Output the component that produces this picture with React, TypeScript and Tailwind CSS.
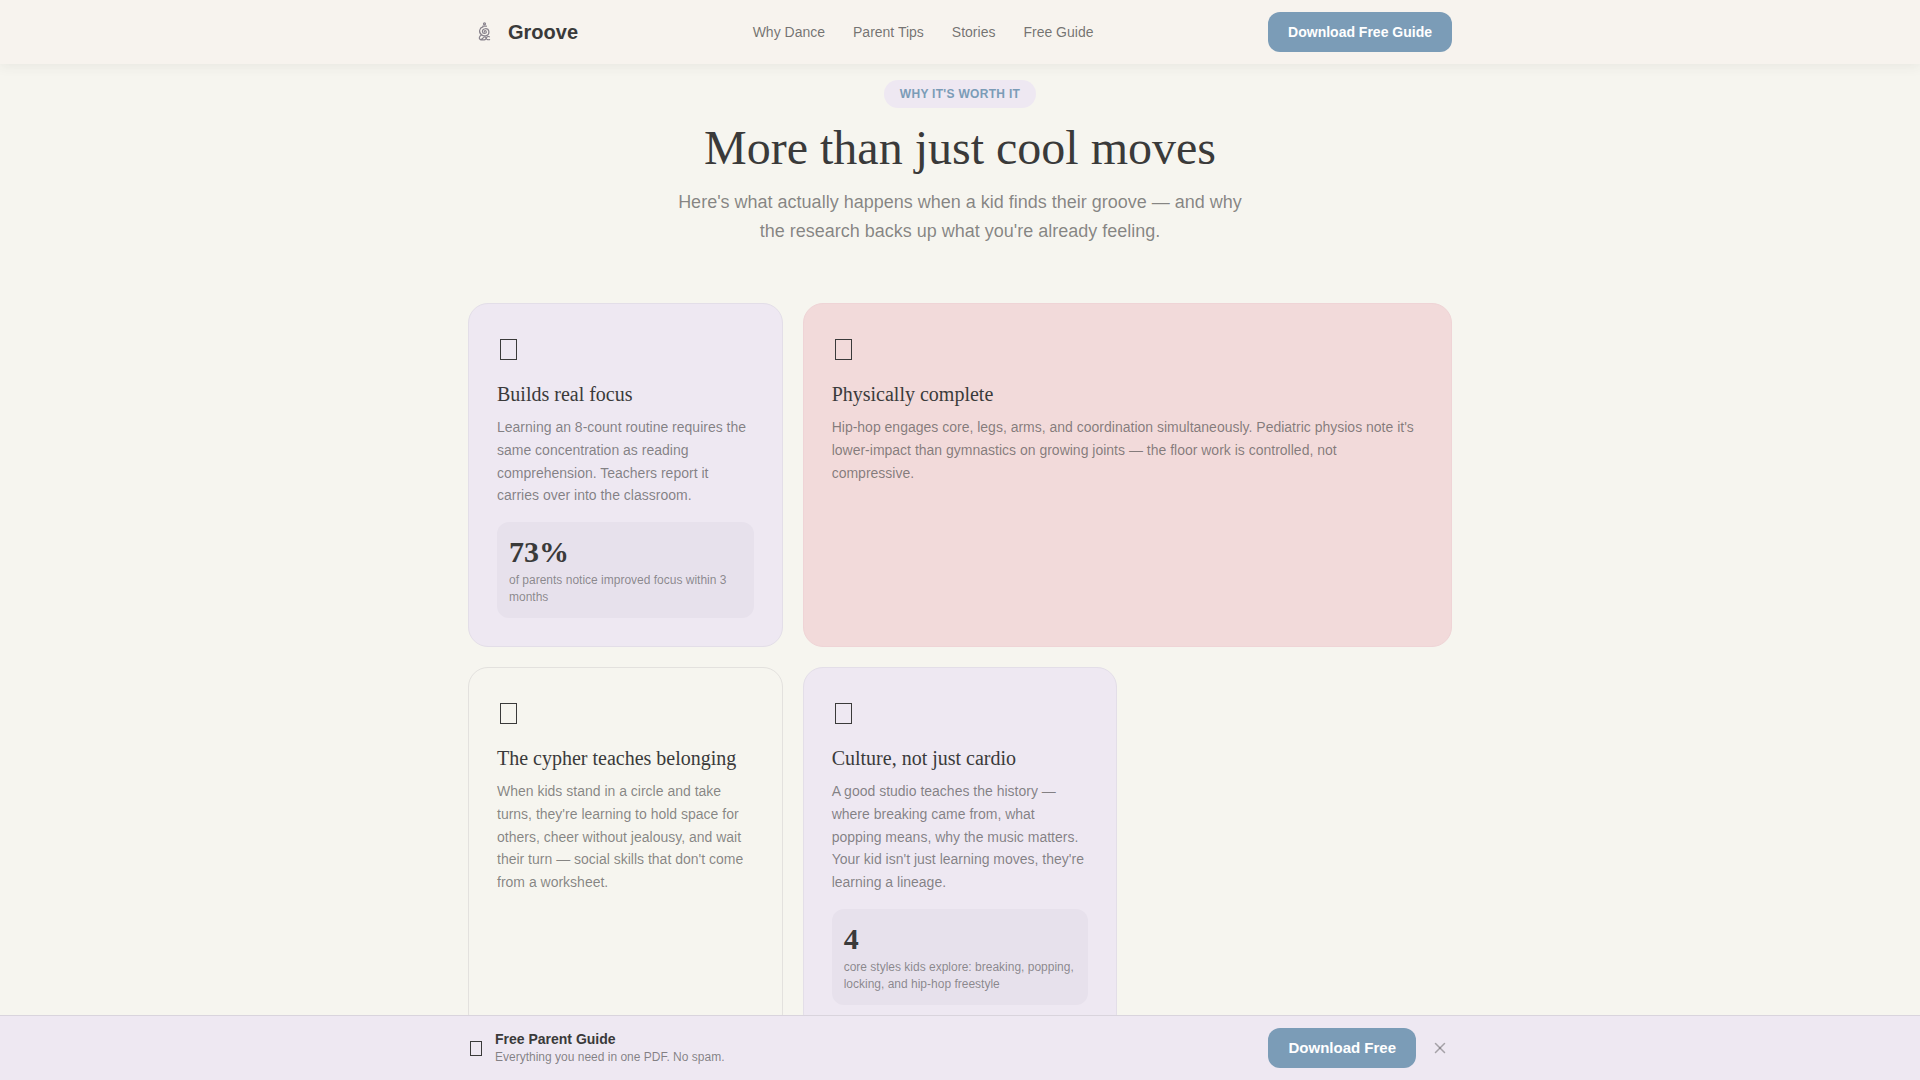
import { useState } from 'react'
import clsx from 'clsx'
import { X } from 'lucide-react'

type Benefit = {
  title: string
  body: string
  tone: 'lavender' | 'blush' | 'plain'
  wide?: boolean
  stat?: { value: string; label: string }
}

const NAV_LINKS = [
  { label: 'Why Dance', href: '#why' },
  { label: 'Parent Tips', href: '#tips' },
  { label: 'Stories', href: '#stories' },
  { label: 'Free Guide', href: '#guide' },
]

const BENEFITS: Benefit[] = [
  {
    title: 'Builds real focus',
    body: 'Learning an 8-count routine requires the same concentration as reading comprehension. Teachers report it carries over into the classroom.',
    tone: 'lavender',
    stat: { value: '73%', label: 'of parents notice improved focus within 3 months' },
  },
  {
    title: 'Physically complete',
    body: "Hip-hop engages core, legs, arms, and coordination simultaneously. Pediatric physios note it's lower-impact than gymnastics on growing joints — the floor work is controlled, not compressive.",
    tone: 'blush',
    wide: true,
  },
  {
    title: 'The cypher teaches belonging',
    body: "When kids stand in a circle and take turns, they're learning to hold space for others, cheer without jealousy, and wait their turn — social skills that don't come from a worksheet.",
    tone: 'plain',
  },
  {
    title: 'Culture, not just cardio',
    body: "A good studio teaches the history — where breaking came from, what popping means, why the music matters. Your kid isn't just learning moves, they're learning a lineage.",
    tone: 'lavender',
    stat: { value: '4', label: 'core styles kids explore: breaking, popping, locking, and hip-hop freestyle' },
  },
]

function LogoMark() {
  return (
    <svg viewBox="0 0 32 32" className="size-8" fill="none" stroke="#88828c" strokeLinecap="round" aria-hidden="true">
      <circle cx="16.5" cy="7.8" r="1" strokeWidth="1.2" />
      <path d="M14.8 10.2h3.6" strokeWidth="1.2" />
      <path
        d="M16.4 15.8c-.4-1.4 1.8-1.6 1.9.2.1 2-3.8 2.1-3.9-.6-.1-3.4 6-3.8 6.5.2.5 4.2-4.6 5.3-7.4 3.2-3.2-2.5-2.2-7 1.5-7.9"
        strokeWidth="1.2"
      />
      <path
        d="M13.2 19.2c-1.9 1-2.6 3.4-1 4.2 1.9.9 2.7-1.8 4.1-2.4 1.6-.7 2.4 1.8.8 2.6-1 .5-2.6.3-4.4.2M21.4 20.8c-1.5-.8-3.2.3-3 1.7.2 1.3 1.8 1.4 3.2 1.1"
        strokeWidth="1.2"
      />
    </svg>
  )
}

function BenefitCard({ title, body, tone, wide, stat }: Benefit) {
  return (
    <article
      className={clsx(
        'rounded-[20px] border p-7',
        tone === 'lavender' && 'border-[#e3dee8] bg-[#eee8f2]',
        tone === 'blush' && 'border-[#efd4d6] bg-[#f2dada]',
        tone === 'plain' && 'border-[#e3e1de] bg-[#f6f5ef]',
        wide && 'col-span-2',
      )}
    >
      <div className="flex h-[34px] items-center pl-[3px]" aria-hidden="true">
        <span className="h-[21px] w-[17px] border border-[#3a3a3a]" />
      </div>
      <h3 className="mt-3.5 font-['Liberation_Serif',serif] text-xl leading-7">{title}</h3>
      <p className="mt-2 text-sm leading-relaxed text-[#3a3a3a]/60">{body}</p>
      {stat && (
        <div className="mt-[15px] rounded-xl bg-[#e7e1ec] p-3">
          <div className="font-['Liberation_Serif',serif] text-[30px] leading-9 font-bold">{stat.value}</div>
          <div className="mt-0.5 text-xs leading-[17px] text-[#3a3a3a]/55">{stat.label}</div>
        </div>
      )}
    </article>
  )
}

export default function App() {
  const [barOpen, setBarOpen] = useState(true)

  return (
    <div className="min-h-screen bg-[#f6f5ef] font-['Liberation_Sans',sans-serif] text-[#3a3a3a]">
      <header className="sticky top-0 z-10 bg-[#f7f3ee] shadow-[0_2px_12px_rgba(58,58,58,0.08)]">
        <div className="mx-auto flex h-16 max-w-[1080px] items-center justify-between px-12">
          <a href="#top" className="flex items-center gap-2 text-xl font-bold">
            <LogoMark />
            Groove
          </a>
          <nav className="flex gap-7 text-sm text-[#3a3a3a]/70">
            {NAV_LINKS.map((link) => (
              <a key={link.href} href={link.href}>
                {link.label}
              </a>
            ))}
          </nav>
          <button type="button" className="h-10 rounded-xl bg-[#7b9cb7] px-5 text-sm font-bold text-white">
            Download Free Guide
          </button>
        </div>
      </header>

      <main className="mx-auto max-w-[1080px] px-12 pt-4 pb-10">
        <div className="flex flex-col items-center text-center">
          <span className="rounded-full bg-[#eee8f2] px-4 py-1.5 text-xs font-bold tracking-wide text-[#7b9cb7] uppercase">
            Why it's worth it
          </span>
          <h2 className="mt-3 font-['Liberation_Serif',serif] text-5xl leading-14">More than just cool moves</h2>
          <p className="mt-3 max-w-[580px] text-lg leading-[29px] text-[#3a3a3a]/60">
            Here's what actually happens when a kid finds their groove — and why the research backs up what you're
            already feeling.
          </p>
        </div>

        <section id="why" className="mt-[57px] grid grid-cols-3 gap-5">
          {BENEFITS.map((b) => (
            <BenefitCard key={b.title} {...b} />
          ))}
        </section>
      </main>

      {barOpen && (
        <div className="fixed inset-x-0 bottom-0 z-10 border-t border-[#d9d4dd] bg-[#eee8f2]">
          <div className="mx-auto flex h-16 max-w-[1080px] items-center justify-between px-12">
            <div className="flex items-center gap-3">
              <span className="pr-px pl-0.5" aria-hidden="true">
                <span className="block h-[15px] w-3 border border-[#3a3a3a]" />
              </span>
              <div>
                <div className="text-sm leading-[18px] font-bold">Free Parent Guide</div>
                <div className="text-xs leading-[18px] text-[#3a3a3a]/60">Everything you need in one PDF. No spam.</div>
              </div>
            </div>
            <div className="flex items-center gap-3">
              <button type="button" className="h-10 rounded-xl bg-[#7b9cb7] px-5 text-[15px] font-bold text-white">
                Download Free
              </button>
              <button
                type="button"
                aria-label="Dismiss"
                onClick={() => setBarOpen(false)}
                className="flex size-6 items-center justify-center text-[#3a3a3a]/40"
              >
                <X size={18} strokeWidth={2} />
              </button>
            </div>
          </div>
        </div>
      )}
    </div>
  )
}
